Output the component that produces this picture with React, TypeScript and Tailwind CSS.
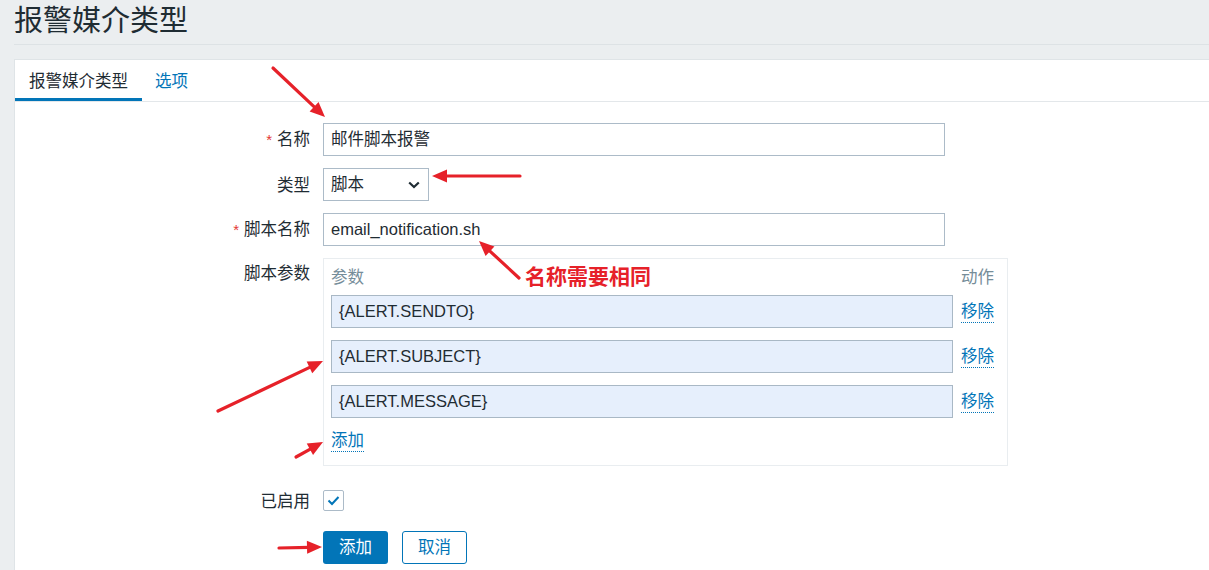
import React from 'react';

const FONT = 'font-["Liberation_Sans","Noto_Sans_CJK_SC",sans-serif]';

function Arrow({ x1, y1, x2, y2 }: { x1: number; y1: number; x2: number; y2: number }) {
  const a = Math.atan2(y2 - y1, x2 - x1);
  const L = 15;
  const W = 6.5;
  const bx = x2 - L * Math.cos(a);
  const by = y2 - L * Math.sin(a);
  const lx = bx + W * Math.sin(a);
  const ly = by - W * Math.cos(a);
  const rx = bx - W * Math.sin(a);
  const ry = by + W * Math.cos(a);
  const ex = x2 - (L - 2) * Math.cos(a);
  const ey = y2 - (L - 2) * Math.sin(a);
  return (
    <g>
      <line x1={x1} y1={y1} x2={ex} y2={ey} stroke="#e62129" strokeWidth={3.2} strokeLinecap="round" />
      <polygon points={`${x2},${y2} ${lx},${ly} ${rx},${ry}`} fill="#e62129" />
    </g>
  );
}

function Label({ children, required }: { children: React.ReactNode; required?: boolean }) {
  return (
    <div className="w-[308px] shrink-0 pr-[13px] text-right text-[16.5px] leading-[22px] text-[#1f2c33]">
      {required && <span className="text-[#e33734] mr-[5px] text-[15px]">*</span>}
      {children}
    </div>
  );
}

function TextInput({ value, width = 'w-[622px]' }: { value: string; width?: string }) {
  return (
    <div className={`${width} h-[33px] border border-[#acbbc8] bg-white flex items-center px-[7px] text-[16.5px] text-[#1f2c33]`}>
      {value}
    </div>
  );
}

function ParamRow({ value }: { value: string }) {
  return (
    <div className="flex items-center gap-[8px]">
      <div className="w-[622px] h-[33px] border border-[#a9b8c5] bg-[#e6effc] flex items-center px-[7px] text-[16.5px] text-[#1f2c33]">
        {value}
      </div>
      <span className="text-[16.5px] leading-[22px] text-[#0275b8] border-b border-dotted border-[#0275b8]">移除</span>
    </div>
  );
}

export default function App() {
  return (
    <div className={`relative w-full h-[570px] overflow-hidden bg-[#ebeef0] ${FONT}`}>
      {/* Header */}
      <div className="ml-[14px] h-[45px] border-b border-[#dde2e5] flex items-center">
        <h1 className="text-[29px] leading-[38px] text-[#1f2c33] -mt-[3px]">报警媒介类型</h1>
      </div>

      {/* Panel */}
      <div className="ml-[14px] mt-[14px] bg-white border-l border-t border-[#dfe4e7] h-[600px]">
        {/* Tabs */}
        <div className="h-[42px] border-b border-[#e3e7ea] flex items-stretch">
          <div className="px-[14px] flex items-center border-b-[3px] border-[#0275b8] text-[16.5px] text-[#1f2c33] pt-[4px]">
            报警媒介类型
          </div>
          <div className="pl-[13px] flex items-center text-[16.5px] text-[#0275b8] pt-[1px]">选项</div>
        </div>

        {/* Form */}
        <div className="pt-[21px] flex flex-col">
          <div className="flex items-center">
            <Label required>名称</Label>
            <TextInput value="邮件脚本报警" />
          </div>

          <div className="flex items-center mt-[12px]">
            <Label>类型</Label>
            <div className="w-[106px] h-[33px] border border-[#acbbc8] bg-white flex items-center justify-between pl-[7px] pr-[8px] text-[16.5px] text-[#1f2c33]">
              <span>脚本</span>
              <svg width="12" height="8" viewBox="0 0 12 8">
                <path d="M1.2 1.5 L6 6 L10.8 1.5" fill="none" stroke="#1f2c33" strokeWidth="2.2" />
              </svg>
            </div>
          </div>

          <div className="flex items-center mt-[12px]">
            <Label required>脚本名称</Label>
            <TextInput value="email_notification.sh" />
          </div>

          <div className="flex items-start mt-[12px]">
            <div className="pt-[4px]">
              <Label>脚本参数</Label>
            </div>
            <div className="w-[685px] h-[208px] border border-[#e9edf0] px-[7px] pt-[7px]">
              <div className="flex items-center gap-[8px] h-[22px] text-[16.5px] text-[#768d99]">
                <span className="w-[622px]">参数</span>
                <span>动作</span>
              </div>
              <div className="mt-[7px] flex flex-col gap-[12px]">
                <ParamRow value="{ALERT.SENDTO}" />
                <ParamRow value="{ALERT.SUBJECT}" />
                <ParamRow value="{ALERT.MESSAGE}" />
              </div>
              <div className="mt-[12px] h-[22px] flex items-center">
                <span className="text-[16.5px] leading-[21px] text-[#0275b8] border-b border-dotted border-[#0275b8]">添加</span>
              </div>
            </div>
          </div>

          <div className="flex items-center mt-[24px] h-[21px]">
            <Label>已启用</Label>
            <div className="w-[21px] h-[21px] border border-[#acbbc8] rounded-[2px] bg-white flex items-center justify-center">
              <svg width="15" height="15" viewBox="0 0 15 15">
                <path d="M2.5 7.5 L6 11 L12.5 4" fill="none" stroke="#0275b8" strokeWidth="2" />
              </svg>
            </div>
          </div>

          <div className="flex items-center mt-[20px]">
            <div className="w-[308px] shrink-0" />
            <button className="w-[65px] h-[33px] rounded-[3px] bg-[#0275b8] text-white text-[16.5px]">添加</button>
            <button className="ml-[14px] w-[65px] h-[33px] rounded-[3px] bg-white border border-[#0275b8] text-[#0275b8] text-[16.5px]">取消</button>
          </div>
        </div>
      </div>

      {/* Annotations */}
      <div className="absolute left-[525px] top-[264px] text-[21px] leading-[26px] font-bold text-[#e62129]">名称需要相同</div>
      <svg className="absolute inset-0 pointer-events-none" width="1209" height="570">
        <Arrow x1={273} y1={68} x2={325} y2={117} />
        <Arrow x1={520} y1={176} x2={432} y2={176} />
        <Arrow x1={519} y1={278} x2={479} y2={241} />
        <Arrow x1={218} y1={411} x2={323} y2={361} />
        <Arrow x1={296} y1={457} x2={323} y2={442} />
        <Arrow x1={279} y1={548} x2={322} y2={547} />
      </svg>
    </div>
  );
}
